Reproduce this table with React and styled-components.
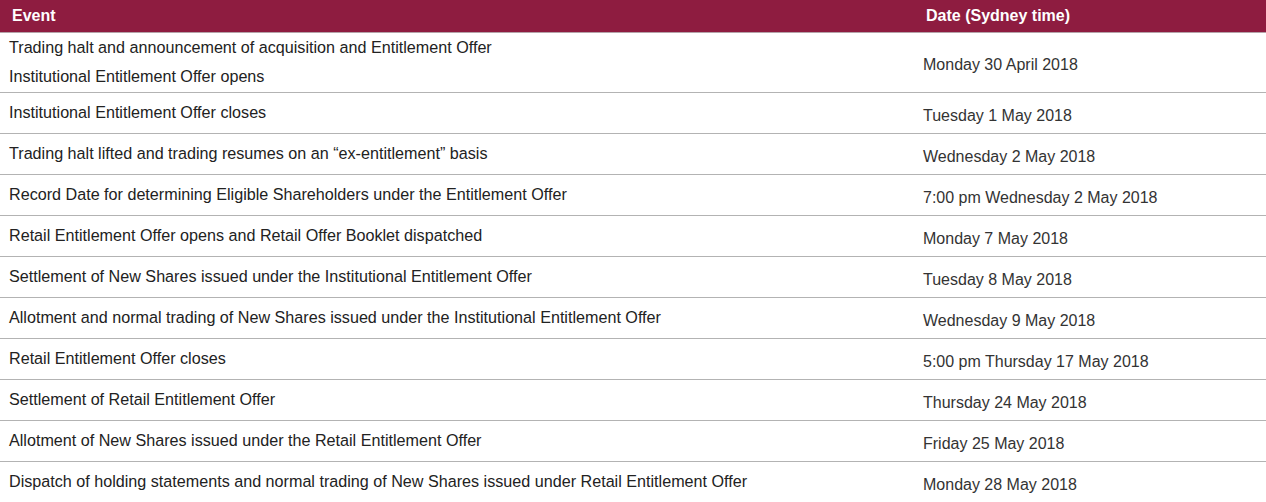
import React from 'react';
import styled, { createGlobalStyle } from 'styled-components';

const GlobalStyle = createGlobalStyle`
  body {
    margin: 0;
    background: #fff;
    font-family: "Liberation Sans", Arial, sans-serif;
  }
`;

const rows = [
  { events: ['Trading halt and announcement of acquisition and Entitlement Offer', 'Institutional Entitlement Offer opens'], date: 'Monday 30 April 2018' },
  { events: ['Institutional Entitlement Offer closes'], date: 'Tuesday 1 May 2018' },
  { events: ['Trading halt lifted and trading resumes on an \u201cex-entitlement\u201d basis'], date: 'Wednesday 2 May 2018' },
  { events: ['Record Date for determining Eligible Shareholders under the Entitlement Offer'], date: '7:00 pm Wednesday 2 May 2018' },
  { events: ['Retail Entitlement Offer opens and Retail Offer Booklet dispatched'], date: 'Monday 7 May 2018' },
  { events: ['Settlement of New Shares issued under the Institutional Entitlement Offer'], date: 'Tuesday 8 May 2018' },
  { events: ['Allotment and normal trading of New Shares issued under the Institutional Entitlement Offer'], date: 'Wednesday 9 May 2018' },
  { events: ['Retail Entitlement Offer closes'], date: '5:00 pm Thursday 17 May 2018' },
  { events: ['Settlement of Retail Entitlement Offer'], date: 'Thursday 24 May 2018' },
  { events: ['Allotment of New Shares issued under the Retail Entitlement Offer'], date: 'Friday 25 May 2018' },
  { events: ['Dispatch of holding statements and normal trading of New Shares issued under Retail Entitlement Offer'], date: 'Monday 28 May 2018' },
];

const Table = styled.div`
  width: 1266px;
`;

const HeaderRow = styled.div`
  display: grid;
  grid-template-columns: 914px 1fr;
  height: 32px;
  align-items: center;
  background: #8e1c40;
  border-bottom: 1px solid #b4a3a9;
  color: #fff;
  font-size: 16px;
  font-weight: bold;
`;

const HeaderCell = styled.div`
  padding-left: 12px;
`;

const Row = styled.div`
  display: grid;
  grid-template-columns: 914px 1fr;
  height: ${p => (p.tall ? '59px' : '40px')};
  border-bottom: ${p => (p.last ? 'none' : '1px solid #b3b3b3')};
`;

const EventCell = styled.div`
  display: flex;
  flex-direction: column;
  justify-content: center;
  gap: ${p => (p.multi ? '11px' : '0')};
  padding: 0 0 2px 9px;
  color: #222;
  font-size: 16.15px;
`;

const EventLine = styled.div`
  line-height: 18px;
`;

const DateCell = styled.div`
  display: flex;
  align-items: center;
  padding: 5px 0 0 9px;
  color: #333;
  font-size: 16px;
`;

export default function App() {
  return (
    <>
      <GlobalStyle />
      <Table>
        <HeaderRow>
          <HeaderCell>Event</HeaderCell>
          <HeaderCell>Date (Sydney time)</HeaderCell>
        </HeaderRow>
        {rows.map((row, i) => (
          <Row key={i} tall={row.events.length > 1} last={i === rows.length - 1}>
            <EventCell multi={row.events.length > 1}>
              {row.events.map(e => <EventLine key={e}>{e}</EventLine>)}
            </EventCell>
            <DateCell>{row.date}</DateCell>
          </Row>
        ))}
      </Table>
    </>
  );
}
